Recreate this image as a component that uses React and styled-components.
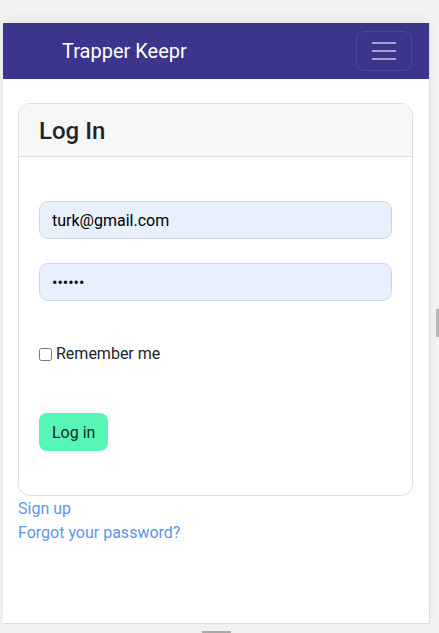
import React from "react";
import styled, { createGlobalStyle } from "styled-components";

const Global = createGlobalStyle`
  html, body { margin: 0; padding: 0; }
  body {
    background: #f2f2f2;
    font-family: Roboto, "Liberation Sans", sans-serif;
    color: #212529;
    width: 439px;
    height: 633px;
    overflow: hidden;
    position: relative;
  }
  * { box-sizing: border-box; }
`;

const Frame = styled.div`
  margin: 23px 0 0 3px;
  width: 427px;
  height: 601px;
  background: #fff;
  border-right: 1px solid #dcdcdc;
  border-bottom: 1px solid #dcdcdc;
  box-shadow: 0 -4px 10px rgba(0, 0, 0, 0.05);
  display: flex;
  flex-direction: column;
`;

const Navbar = styled.nav`
  height: 56px;
  background: #3b358c;
  display: flex;
  align-items: center;
  justify-content: space-between;
  padding: 0 17px 0 59px;
`;

const Brand = styled.a`
  color: #fff;
  font-size: 20px;
  line-height: 30px;
  text-decoration: none;
`;

const Toggler = styled.button`
  width: 56px;
  height: 40px;
  border: 1px solid rgba(255, 255, 255, 0.1);
  border-radius: 8px;
  background: transparent;
  display: flex;
  flex-direction: column;
  align-items: center;
  justify-content: center;
  gap: 6px;
  padding: 0;
`;

const Bar = styled.span`
  display: block;
  width: 24px;
  height: 2px;
  background: rgba(255, 255, 255, 0.55);
`;

const Content = styled.main`
  padding: 24px 16px 0 15px;
`;

const Card = styled.section`
  border: 1px solid #dedede;
  border-radius: 12px;
  overflow: hidden;
`;

const CardHeader = styled.header`
  background: #f7f7f7;
  border-bottom: 1px solid #dedede;
  padding: 13px 20px 10px;
`;

const Title = styled.h1`
  margin: 0;
  font-size: 24px;
  font-weight: 500;
  line-height: 29px;
  color: #212529;
`;

const CardBody = styled.form`
  padding: 44px 20px 44px;
  display: flex;
  flex-direction: column;
  align-items: flex-start;
`;

const Input = styled.input`
  width: 100%;
  height: 38px;
  border: 1px solid #cfd5df;
  border-radius: 9px;
  background: #e8f0fe;
  padding: 0 12px;
  font-family: Roboto, "Liberation Sans", sans-serif;
  font-size: 16px;
  color: #000;
  margin-bottom: ${(p) => p.$mb || 0}px;
  outline: none;
`;

const CheckRow = styled.label`
  display: flex;
  align-items: center;
  font-size: 16px;
  line-height: 24px;
  margin-top: 41px;
  margin-bottom: 47px;
`;

const Check = styled.input`
  width: 13px;
  height: 13px;
  margin: 0 4px 0 0;
`;

const SubmitButton = styled.button`
  height: 38px;
  padding: 0 13px;
  border: none;
  border-radius: 8px;
  background: #56f6b7;
  color: #212529;
  font-family: Roboto, "Liberation Sans", sans-serif;
  font-size: 16px;
`;

const Links = styled.div`
  display: flex;
  flex-direction: column;
  align-items: flex-start;
  padding-top: 1px;
`;

const Link = styled.a`
  color: #5b95ef;
  font-size: 16px;
  line-height: 24px;
  text-decoration: none;
`;

const ScrollThumbV = styled.div`
  position: absolute;
  left: 436px;
  top: 309px;
  width: 3px;
  height: 28px;
  background: #b4b4b4;
`;

const ScrollThumbH = styled.div`
  position: absolute;
  left: 202px;
  top: 631px;
  width: 29px;
  height: 2px;
  background: #a9a9a9;
`;

export default function App() {
  return (
    <>
      <Global />
      <Frame>
        <Navbar>
          <Brand href="#">Trapper Keepr</Brand>
          <Toggler type="button" aria-label="Toggle navigation">
            <Bar />
            <Bar />
            <Bar />
          </Toggler>
        </Navbar>
        <Content>
          <Card>
            <CardHeader>
              <Title>Log In</Title>
            </CardHeader>
            <CardBody onSubmit={(e) => e.preventDefault()}>
              <Input type="email" defaultValue="turk@gmail.com" $mb={24} />
              <Input type="password" defaultValue="secret" />
              <CheckRow>
                <Check type="checkbox" />
                Remember me
              </CheckRow>
              <SubmitButton type="submit">Log in</SubmitButton>
            </CardBody>
          </Card>
          <Links>
            <Link href="#">Sign up</Link>
            <Link href="#">Forgot your password?</Link>
          </Links>
        </Content>
      </Frame>
      <ScrollThumbV />
      <ScrollThumbH />
    </>
  );
}
